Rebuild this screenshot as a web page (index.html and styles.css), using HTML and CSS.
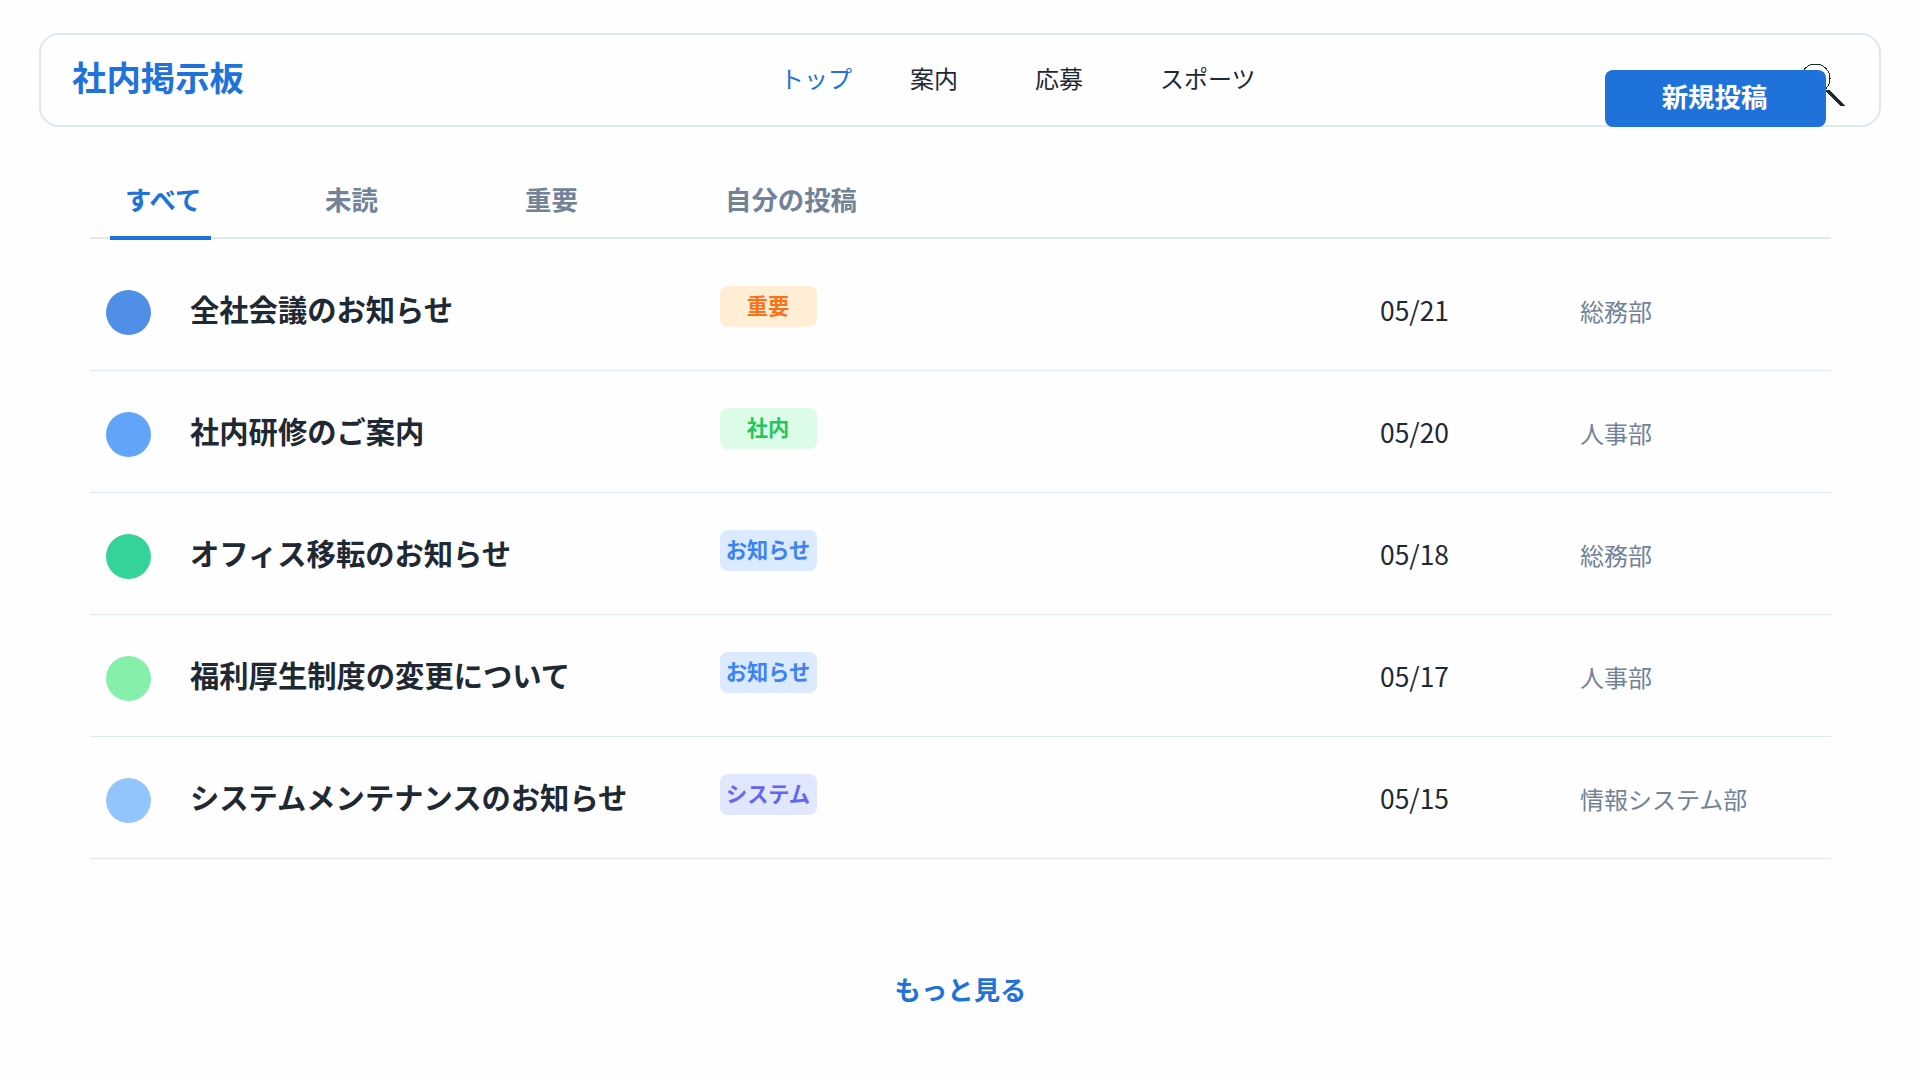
FILE: index.html
```
<!DOCTYPE html>
<html lang="ja">
<head>
<meta charset="UTF-8">
<meta name="viewport" content="width=device-width, initial-scale=1.0">
<title>社内掲示板</title>
<link rel="stylesheet" href="styles.css">
</head>
<body>

<header class="header">
  <h1 class="logo">社内掲示板</h1>
  <nav class="nav">
    <a class="active">トップ</a>
    <a>案内</a>
    <a>応募</a>
    <a>スポーツ</a>
  </nav>
  <svg class="search" width="46" height="46" viewBox="0 0 46 46" shape-rendering="crispEdges">
    <circle cx="15.5" cy="15.5" r="14.5" fill="none" stroke="#1f2933" stroke-width="1"/>
    <path d="M25 27h5L45 43h-5z" fill="#1f2933"/>
  </svg>
  <button class="new-post">新規投稿</button>
</header>

<main class="content">
  <div class="tabs">
    <div class="tab active">すべて</div>
    <div class="tab">未読</div>
    <div class="tab">重要</div>
    <div class="tab">自分の投稿</div>
  </div>

  <ul class="posts">
    <li class="post">
      <span class="dot dot-1"></span>
      <span class="title">全社会議のお知らせ</span>
      <span class="badge important">重要</span>
      <span class="date">05/21</span>
      <span class="dept">総務部</span>
    </li>
    <li class="post">
      <span class="dot dot-2"></span>
      <span class="title">社内研修のご案内</span>
      <span class="badge internal">社内</span>
      <span class="date">05/20</span>
      <span class="dept">人事部</span>
    </li>
    <li class="post">
      <span class="dot dot-3"></span>
      <span class="title">オフィス移転のお知らせ</span>
      <span class="badge notice">お知らせ</span>
      <span class="date">05/18</span>
      <span class="dept">総務部</span>
    </li>
    <li class="post">
      <span class="dot dot-4"></span>
      <span class="title">福利厚生制度の変更について</span>
      <span class="badge notice">お知らせ</span>
      <span class="date">05/17</span>
      <span class="dept">人事部</span>
    </li>
    <li class="post">
      <span class="dot dot-5"></span>
      <span class="title">システムメンテナンスのお知らせ</span>
      <span class="badge system">システム</span>
      <span class="date">05/15</span>
      <span class="dept">情報システム部</span>
    </li>
  </ul>

  <a class="more">もっと見る</a>
</main>

</body>
</html>
```
FILE: styles.css
```
* {
  box-sizing: border-box;
}

body {
  margin: 0;
  padding: 33px 39px 0;
  height: 1080px;
  overflow: hidden;
  font-family: "Noto Sans CJK JP", sans-serif;
  background-color: #fefefe;
  color: #1f2933;
}

.header {
  position: relative;
  display: flex;
  height: 94px;
  padding: 0 33px 0 31px;
  border: 2px solid #dfe8f1;
  border-radius: 20px;
}

.logo {
  width: 708px;
  margin: 0;
  font-size: 34.4px;
  line-height: 82px;
  color: #1f72d9;
}

.nav {
  display: grid;
  grid-template-columns: 130px 125px 125px 120px;
  font-size: 24px;
  line-height: 86px;
}

.nav .active {
  color: #1f72d9;
}

.search {
  margin: 28px 0 0 auto;
}

/* sits on the header's bottom edge, over the search icon */
.new-post {
  position: absolute;
  right: 53px;
  bottom: -2px;
  width: 221px;
  height: 57px;
  padding: 0 2px 5px 0;
  border: none;
  border-radius: 8px;
  background-color: #1f72d9;
  color: #fff;
  font-family: inherit;
  font-size: 26.4px;
  font-weight: bold;
  line-height: 52px;
}

.content {
  margin: 30px 50px 0 51px;
}

.tabs {
  display: flex;
  gap: 99px;
  height: 83px;
  padding: 0 20px;
  box-shadow: inset 0 -1px #fefefe, inset 0 -3px #dfe8f1;
}

.tab {
  width: 101px;
  padding-left: 15px;
  font-size: 26.4px;
  font-weight: bold;
  line-height: 84px;
  color: #718299;
  white-space: nowrap;
}

.tab.active {
  border-bottom: 4px solid #1f72d9;
  color: #1f72d9;
}

.posts {
  list-style: none;
  margin: 9px 0 0;
  padding: 0;
}

.post {
  display: grid;
  grid-template-columns: 84px 530px 660px 200px 1fr;
  height: 122px;
  padding-left: 16px;
  border-bottom: 1px solid #dfe8f1;
}

.dot {
  width: 45px;
  height: 45px;
  margin-top: 41px;
  border-radius: 50%;
}

.dot-1 { background-color: #4f8fe8; }
.dot-2 { background-color: #60a5fa; }
.dot-3 { background-color: #34d399; }
.dot-4 { background-color: #86efac; }
.dot-5 { background-color: #93c5fd; }

.title {
  font-size: 29.3px;
  font-weight: bold;
  line-height: 119px;
}

.badge {
  width: 97px;
  height: 41px;
  margin-top: 37px;
  padding-right: 1px;
  border-radius: 8px;
  font-size: 21.2px;
  font-weight: bold;
  line-height: 38px;
  text-align: center;
}

.important { background-color: #ffedd5; color: #f97316; }
.internal { background-color: #dcfce7; color: #22c55e; }
.notice { background-color: #dbeafe; color: #3b82f6; }
.system { background-color: #e0e7ff; color: #6366f1; }

.date {
  font-size: 26.4px;
  line-height: 122px;
}

.dept {
  font-size: 24px;
  line-height: 124px;
  color: #718299;
}

.more {
  display: block;
  margin-top: 110px;
  font-size: 26.4px;
  font-weight: bold;
  line-height: 40px;
  text-align: center;
  color: #1f72d9;
}
```
